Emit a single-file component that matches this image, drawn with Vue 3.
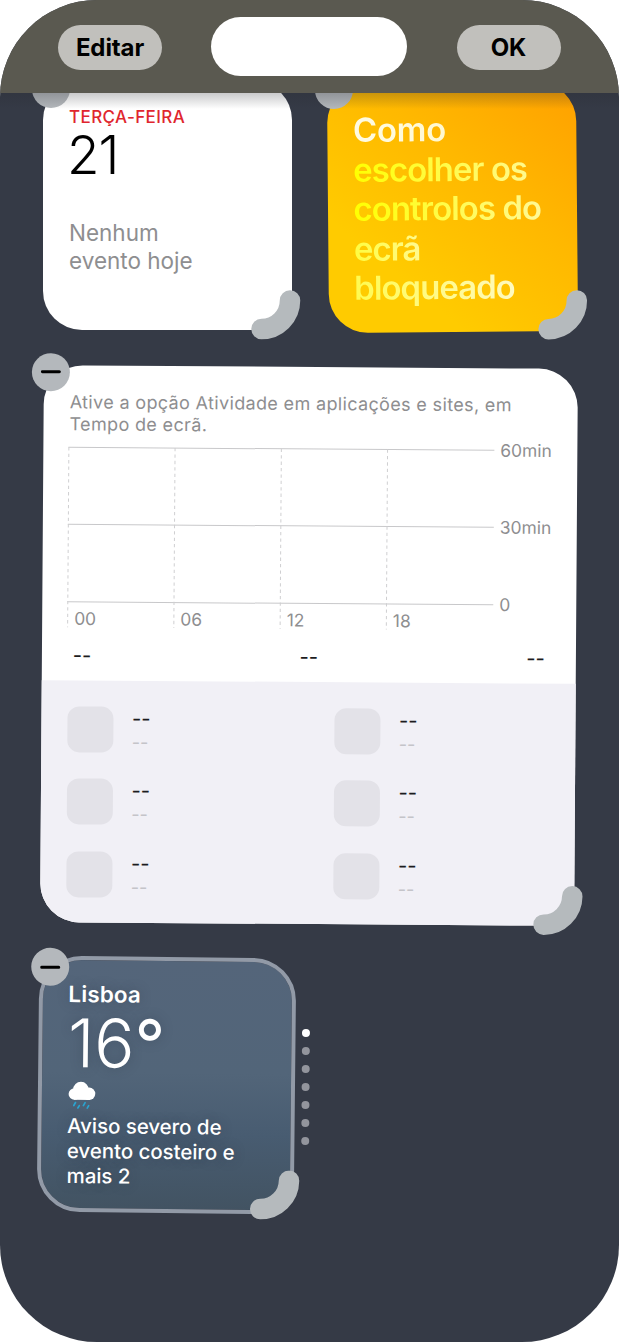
<template>
    <div class="phone">
        <header class="topbar">
            <button class="topbar-button">Editar</button>
            <div class="topbar-island"></div>
            <button class="topbar-button">OK</button>
        </header>

        <main class="board">
            <div class="board-shade"></div>

            <div class="board-row board-row-small">
                <section class="widget widget-calendar">
                    <div class="calendar-weekday">TERÇA-FEIRA</div>
                    <div class="calendar-day">21</div>
                    <div class="calendar-empty">Nenhum<br />evento hoje</div>
                    <span class="widget-remove"></span>
                    <svg class="widget-resize" viewBox="0 0 50 50">
                        <path d="M39 10.5A28.5 28.5 0 0 1 10.5 39" />
                    </svg>
                </section>

                <section class="widget widget-tips">
                    <div
                        v-for="(line, index) in tipLines"
                        :key="line"
                        class="tips-line"
                        :class="'tips-line-' + index"
                    >
                        <span>{{ line }}</span>
                    </div>
                    <span class="widget-remove"></span>
                    <svg class="widget-resize" viewBox="0 0 50 50">
                        <path d="M39 10.5A28.5 28.5 0 0 1 10.5 39" />
                    </svg>
                </section>
            </div>

            <section class="widget widget-screentime">
                <div class="screentime-top">
                    <p class="screentime-hint">
                        Ative a opção Atividade em aplicações e sites, em<br />
                        <span>Tempo de ecrã.</span>
                    </p>
                    <svg class="screentime-chart" viewBox="0 0 500 190">
                        <g v-for="tick in yTicks" :key="tick.label">
                            <line class="grid" x1="0" x2="426" :y1="tick.y" :y2="tick.y" />
                            <text x="432" :y="tick.y + 6.3">{{ tick.label }}</text>
                        </g>
                        <g v-for="tick in xTicks" :key="tick.label">
                            <line class="grid-dashed" :x1="tick.x" :x2="tick.x" y1="9" y2="189" />
                            <text :x="tick.x + 6.5" y="186.5">{{ tick.label }}</text>
                        </g>
                    </svg>
                    <div class="screentime-totals">
                        <span v-for="n in 3" :key="n">--</span>
                    </div>
                </div>
                <div class="screentime-apps">
                    <div v-for="n in 6" :key="n" class="app">
                        <div class="app-icon"></div>
                        <div class="app-info">
                            <span class="app-name">--</span>
                            <span class="app-time">--</span>
                        </div>
                    </div>
                </div>
                <span class="widget-remove"></span>
                <svg class="widget-resize" viewBox="0 0 50 50">
                    <path d="M39 10.5A28.5 28.5 0 0 1 10.5 39" />
                </svg>
            </section>

            <div class="board-row board-row-weather">
                <section class="widget widget-weather">
                    <div class="weather-city">Lisboa</div>
                    <div class="weather-temp">16<span>°</span></div>
                    <svg class="weather-icon" viewBox="0 0 28 28">
                        <g fill="#fff">
                            <circle cx="6.5" cy="13" r="5.8" />
                            <circle cx="13" cy="8.5" r="7.8" />
                            <circle cx="21.2" cy="12.6" r="6.2" />
                            <rect x="6" y="9" width="16" height="9.8" />
                        </g>
                        <path
                            class="rain"
                            d="M7.7 21.5l-1.7 3M11.5 24.5l-1.4 2.4M17.3 21.5l-1.7 3M20.9 24.5l-1.4 2.4"
                        />
                    </svg>
                    <div class="weather-alert">Aviso severo de<br />evento costeiro e<br />mais 2</div>
                    <span class="widget-remove"></span>
                    <svg class="widget-resize" viewBox="0 0 50 50">
                        <path d="M39 10.5A28.5 28.5 0 0 1 10.5 39" />
                    </svg>
                </section>
                <div class="pager">
                    <i v-for="n in 7" :key="n" :class="{ active: n === 1 }"></i>
                </div>
            </div>
        </main>
    </div>
</template>

<script setup>
const tipLines = ["Como", "escolher os", "controlos do", "ecrã", "bloqueado"];

const yTicks = [
    { label: "60min", y: 9 },
    { label: "30min", y: 86 },
    { label: "0", y: 163.5 },
];

const xTicks = [
    { label: "00", x: 0.5 },
    { label: "06", x: 106.7 },
    { label: "12", x: 213 },
    { label: "18", x: 319.2 },
];
</script>

<style>
body {
    margin: 0;
    background: #fff;
}
</style>

<style scoped>
.phone {
    display: flex;
    flex-direction: column;
    width: 618.5px;
    height: 1342px;
    overflow: hidden;
    border-radius: 97px;
    background: #353a46;
    font-family: Inter, "Liberation Sans", sans-serif;
}

.topbar {
    display: flex;
    justify-content: space-between;
    box-sizing: border-box;
    flex: none;
    height: 93px;
    padding: 17px 58px 0;
    background: #5a5950;
}

.topbar-button {
    width: 104px;
    height: 45px;
    margin-top: 8px;
    padding: 0;
    border: 0;
    border-radius: 22.5px;
    background: #c1c0bc;
    color: #000;
    font: 650 24px/43px Inter, "Liberation Sans", sans-serif;
    letter-spacing: -0.1px;
}

.topbar-island {
    width: 196px;
    height: 59px;
    border-radius: 30px;
    background: #fff;
}

.board {
    position: relative;
    flex: 1;
    overflow: hidden;
}

.board-shade {
    position: absolute;
    z-index: 2;
    top: 0;
    left: 0;
    right: 0;
    height: 16px;
    background: linear-gradient(rgba(40, 42, 48, 0.25), rgba(40, 42, 48, 0));
}

.board-row {
    display: flex;
}

.board-row-small {
    gap: 36px;
    margin: -12px 0 0 43px;
}

.widget {
    position: relative;
    box-sizing: border-box;
    border-radius: 39px;
}

.widget-remove {
    position: absolute;
    top: -11.5px;
    left: -11px;
    display: flex;
    align-items: center;
    justify-content: center;
    width: 38px;
    height: 38px;
    border-radius: 50%;
    background: #b4b8bc;
}

.widget-remove::before {
    content: "";
    width: 20px;
    height: 3px;
    border-radius: 1.5px;
    background: #000;
}

.widget-resize {
    position: absolute;
    right: -9px;
    bottom: -10px;
    width: 50px;
    height: 50px;
}

.widget-resize path {
    fill: none;
    stroke: #b5babd;
    stroke-width: 20.5;
    stroke-linecap: round;
}

.widget-calendar {
    width: 249px;
    height: 249px;
    padding: 26px 0 0 26px;
    background: #fff;
}

.calendar-weekday {
    color: #e0262e;
    font-size: 17px;
    font-weight: 550;
    line-height: 21px;
    letter-spacing: 0.4px;
}

.calendar-day {
    height: 58px;
    margin: -2px 0 0 -2px;
    color: #000;
    font-size: 53px;
    font-weight: 280;
    line-height: 58px;
    letter-spacing: -1px;
}

.calendar-empty {
    margin-top: 34.5px;
    color: #8e8e90;
    font-size: 22.5px;
    line-height: 28.5px;
}

.widget-tips {
    width: 249px;
    height: 249px;
    margin-top: 1.5px;
    padding: 27px 0 0 25.5px;
    background: linear-gradient(40deg, #ffcb00 25%, #ffb800 62%, #ffa000 100%);
    transform: rotate(-0.5deg);
}

.widget-tips .widget-remove {
    top: -13px;
    left: -12.5px;
}

.widget-tips .widget-resize {
    right: -10px;
    bottom: -9px;
}

.tips-line {
    font-size: 33px;
    font-weight: 600;
    line-height: 39.5px;
    letter-spacing: -1px;
    white-space: nowrap;
}

.tips-line span {
    background: linear-gradient(90deg, #ff0 0, #fff99a 190px);
    background-clip: text;
    -webkit-background-clip: text;
    color: transparent;
}

.tips-line-0 {
    letter-spacing: -0.3px;
}

.tips-line-0 span {
    background-image: linear-gradient(90deg, #fffbe4, #fff8d0);
}

.tips-line-3 span {
    background-image: linear-gradient(90deg, #fffd40, #fffa90);
}

.tips-line-4 span {
    background-image: linear-gradient(90deg, #fffb50, #fffac0);
}

.widget-screentime {
    display: flex;
    flex-direction: column;
    width: 534px;
    height: 556.5px;
    margin: 35.5px 0 0 41.9px;
    background: #fff;
    transform: rotate(0.4deg);
}

.widget-screentime .widget-remove {
    top: -12.5px;
    left: -12px;
}

.screentime-top {
    box-sizing: border-box;
    flex: none;
    height: 315px;
    padding: 26px 25px 0;
}

.screentime-hint {
    margin: 0 0 0 1px;
    color: #8e8e90;
    font-size: 18px;
    line-height: 22px;
    letter-spacing: 0.35px;
    white-space: nowrap;
}

.screentime-chart {
    display: block;
    width: 500px;
    height: 190px;
    margin-top: 3px;
    overflow: visible;
}

.screentime-chart .grid {
    stroke: #c8c8ca;
    stroke-width: 1;
}

.screentime-chart .grid-dashed {
    stroke: #cfcfd1;
    stroke-width: 1;
    stroke-dasharray: 3.3 3.1;
}

.screentime-chart text {
    fill: #8e8e90;
    font-size: 17.4px;
}

.screentime-totals {
    display: flex;
    justify-content: space-between;
    padding: 15px 6px 0;
    color: #1c1c1e;
    font-size: 20px;
    font-weight: 500;
    line-height: 24px;
}

.screentime-apps {
    display: grid;
    grid-template-columns: 267px 1fr;
    grid-auto-rows: 72.5px;
    box-sizing: border-box;
    flex: 1;
    min-height: 0;
    padding: 25.7px 0 0 25.5px;
    border-radius: 0 0 39px 39px;
    background: #f1f0f6;
}

.app {
    display: flex;
    gap: 19px;
}

.app-icon {
    width: 46px;
    height: 46px;
    border-radius: 12px;
    background: #e3e2e8;
}

.app-info {
    display: flex;
    flex-direction: column;
}

.app-name {
    color: #1c1c1e;
    font-size: 20px;
    font-weight: 500;
    line-height: 24px;
}

.app-time {
    color: #c4c4c9;
    font-size: 18px;
    line-height: 24px;
}

.board-row-weather {
    margin: 33.5px 0 0 38.3px;
}

.widget-weather {
    width: 257px;
    height: 256px;
    padding: 20px 0 0 25.5px;
    border: 4.5px solid #929aa7;
    border-radius: 43px;
    background: linear-gradient(#54657a, #526579 45%, #485c71 70%, #425362) padding-box;
    color: #fff;
    transform: rotate(0.6deg);
}

.widget-weather .widget-remove {
    top: -12px;
    left: -12px;
}

.widget-weather .widget-resize {
    right: -9.5px;
    bottom: -9.5px;
}

.weather-city {
    font-size: 22.5px;
    font-weight: 600;
    line-height: 28px;
    letter-spacing: 0.1px;
    text-shadow: 0 0 12px rgba(40, 50, 65, 0.35);
}

.weather-temp {
    height: 70px;
    font-size: 67px;
    font-weight: 300;
    line-height: 70px;
    text-shadow: 0 0 12px rgba(40, 50, 65, 0.35);
}

.weather-temp span {
    font-weight: 380;
}

.weather-icon {
    display: block;
    width: 28px;
    height: 28px;
    margin-top: 3px;
}

.weather-icon .rain {
    fill: none;
    stroke: #2aa3cf;
    stroke-width: 1.7;
    stroke-linecap: round;
}

.weather-alert {
    margin-top: 4px;
    font-size: 20.5px;
    font-weight: 480;
    line-height: 25px;
    letter-spacing: -0.05px;
    white-space: nowrap;
    text-shadow: 0 0 12px rgba(40, 50, 65, 0.35);
}

.pager {
    display: flex;
    flex-direction: column;
    gap: 10px;
    margin: 71.5px 0 0 7.2px;
    transform: rotate(0.4deg);
    transform-origin: 0 0;
}

.pager i {
    width: 8px;
    height: 8px;
    border-radius: 50%;
    background: #93959d;
}

.pager i.active {
    background: #fff;
}
</style>
